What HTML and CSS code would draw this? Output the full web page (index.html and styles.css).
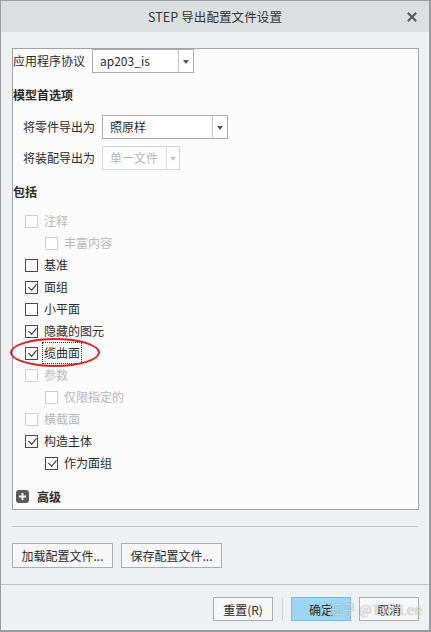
FILE: index.html
```html
<!DOCTYPE html>
<html lang="zh-CN">
<head>
<meta charset="utf-8">
<link rel="stylesheet" href="styles.css">
</head>
<body>
<div class="window">
  <div class="titlebar">
    <span class="title">STEP 导出配置文件设置</span>
    <svg class="close" width="10" height="10" viewBox="0 0 10 10"><path d="M1.5 1.5 L8.5 8.5 M8.5 1.5 L1.5 8.5" stroke="#555" stroke-width="2" stroke-linecap="square"/></svg>
  </div>
  <div class="content">
    <div class="panel">
      <div class="row proto">
        <span class="label">应用程序协议</span>
        <div class="select w1"><span class="val">ap203_is</span><span class="arrow"></span></div>
      </div>
      <div class="heading h1">模型首选项</div>
      <div class="row sub r1">
        <span class="label">将零件导出为</span>
        <div class="select w2"><span class="val">照原样</span><span class="arrow"></span></div>
      </div>
      <div class="row sub r2">
        <span class="label">将装配导出为</span>
        <div class="select w3 disabled"><span class="val">单一文件</span><span class="arrow"></span></div>
      </div>
      <div class="heading h2">包括</div>
      <div class="checks">
        <div class="cb disabled"><span class="box"></span><span class="txt">注释</span></div>
        <div class="cb nested disabled"><span class="box"></span><span class="txt">丰富内容</span></div>
        <div class="cb"><span class="box"></span><span class="txt">基准</span></div>
        <div class="cb checked"><span class="box"></span><span class="txt">面组</span></div>
        <div class="cb"><span class="box"></span><span class="txt">小平面</span></div>
        <div class="cb checked"><span class="box"></span><span class="txt">隐藏的图元</span></div>
        <div class="cb checked focus"><span class="box"></span><span class="txt">缆曲面</span><span class="ring"></span></div>
        <div class="cb disabled"><span class="box"></span><span class="txt">参数</span></div>
        <div class="cb nested disabled"><span class="box"></span><span class="txt">仅限指定的</span></div>
        <div class="cb disabled"><span class="box"></span><span class="txt">横截面</span></div>
        <div class="cb checked"><span class="box"></span><span class="txt">构造主体</span></div>
        <div class="cb nested checked"><span class="box"></span><span class="txt">作为面组</span></div>
      </div>
      <div class="advanced">
        <svg class="plus" width="13" height="13" viewBox="0 0 13 13"><rect x="0" y="0" width="13" height="13" rx="3" fill="#5b5b5b"/><path d="M6.5 3 V10 M3 6.5 H10" stroke="#fff" stroke-width="1.8"/></svg>
        <span class="txt">高级</span>
      </div>
    </div>
    <div class="sep"></div>
    <div class="filebtns">
      <button class="btn wide">加载配置文件...</button>
      <button class="btn wide">保存配置文件...</button>
    </div>
  </div>
  <div class="footer">
    <button class="btn small">重置(R)</button>
    <span class="vsep"></span>
    <button class="btn small primary">确定</button>
    <button class="btn small">取消</button>
    <span class="watermark">知乎 @TomLee</span>
  </div>
</div>
</body>
</html>
```
FILE: styles.css
```css
* { box-sizing: border-box; }
html, body { margin: 0; padding: 0; }
body {
  width: 431px;
  height: 632px;
  font-family: "Noto Sans CJK SC", "Noto Sans", sans-serif;
  font-size: 12px;
  color: #2b2b2b;
  background: #eef0f1;
}
.window {
  width: 431px;
  height: 632px;
  border: 1px solid #9c9c9c;
  border-bottom-width: 2px;
  border-right-width: 2px;
  background: #eef0f1;
  display: flex;
  flex-direction: column;
}
.titlebar {
  height: 31px;
  background: #dcdfe0;
  display: flex;
  align-items: center;
  justify-content: center;
  position: relative;
  flex-shrink: 0;
}
.title { font-size: 12.5px; color: #333; letter-spacing: 0.1px; }
.close { position: absolute; right: 12px; top: 11px; }
.content {
  padding: 16px 10px 0 11px;
  display: flex;
  flex-direction: column;
}
.panel {
  height: 462px;
  border: 1px solid #a3a3a3;
  background: #fbfbfb;
  display: flex;
  flex-direction: column;
}
.row { display: flex; align-items: center; height: 24px; }
.proto .label { margin-left: 0; width: 79px; }
.label { line-height: 24px; }
.sub { padding-left: 10px; }
.sub .label { width: 79px; }
.r1 { margin-top: 9px; }
.r2 { margin-top: 7px; }
.select {
  height: 24px;
  border: 1px solid #ababab;
  background: #fff;
  display: flex;
  align-items: stretch;
}
.select .val { flex: 1; padding-left: 7px; line-height: 22px; }
.select .arrow {
  width: 15px;
  border-left: 1px solid #c4c4c4;
  position: relative;
}
.select .arrow::after {
  content: "";
  position: absolute;
  left: 4px;
  top: 10px;
  border-left: 3.5px solid transparent;
  border-right: 3.5px solid transparent;
  border-top: 4px solid #555;
}
.w1 { width: 102px; margin-top: -1px; }
.w2 { width: 126px; }
.w3 { width: 78px; }
.w3 .arrow { width: 13px; }
.w3 .arrow::after { left: 3px; }
.select.disabled { border-color: #d3d3d3; color: #b5b5b5; }
.select.disabled .arrow { border-left-color: #dadada; }
.select.disabled .arrow::after { border-top-color: #c3c3c3; }
.heading { font-weight: bold; height: 22px; line-height: 22px; color: #2b2b2b; }
.h1 { margin-top: 11px; }
.h2 { margin-top: 11px; }
.checks { margin-top: 7px; display: flex; flex-direction: column; }
.cb {
  height: 22px;
  display: flex;
  align-items: center;
  padding-left: 12px;
  position: relative;
}
.cb.nested { padding-left: 32px; }
.cb .box {
  width: 13px;
  height: 13px;
  border: 1px solid #4a4a4a;
  background: #fff;
  position: relative;
  flex-shrink: 0;
}
.cb.checked .box::after {
  content: "";
  position: absolute;
  left: 3.5px;
  top: 0.5px;
  width: 3.5px;
  height: 7px;
  border-right: 1.6px solid #222;
  border-bottom: 1.6px solid #222;
  transform: rotate(40deg);
}
.cb .txt { margin-left: 6px; line-height: 20px; }
.cb.disabled .box { border-color: #cfcfcf; }
.cb.disabled .txt { color: #b8b8b8; }
.cb.focus .txt {
  outline: 1px dotted #333;
  outline-offset: 0;
  padding: 0 1px;
  margin-left: 5px;
}
.ring {
  position: absolute;
  left: -3px;
  top: -4px;
  width: 90px;
  height: 29px;
  border: 2.5px solid #d8232a;
  border-radius: 50%;
  pointer-events: none;
}
.advanced {
  margin-top: 11px;
  height: 22px;
  display: flex;
  align-items: center;
  padding-left: 3px;
}
.advanced .txt { margin-left: 8px; font-weight: bold; }
.sep {
  margin-top: 16px;
  height: 1px;
  background: #c6c6c6;
  margin-right: 1px;
}
.filebtns {
  margin-top: 16px;
  display: flex;
  gap: 8px;
}
.btn {
  font-family: inherit;
  font-size: 12px;
  color: #2b2b2b;
  background: #f7f7f7;
  border: 1px solid #adadad;
  padding: 0;
  margin: 0;
}
.btn.wide { width: 101px; height: 25px; }
.footer {
  margin-top: 16px;
  border-top: 1px solid #c3c3c3;
  display: flex;
  align-items: center;
  padding: 12px 0 0 212px;
  position: relative;
}
.btn.small { width: 60px; height: 24px; }
.vsep { width: 1px; height: 22px; background: #cfcfcf; margin: 0 8px 0 9px; }
.btn.primary { background: #9cd6f5; border-color: #75bde6; margin-right: 8px; }
.watermark {
  position: absolute;
  left: 328px;
  top: 13px;
  white-space: nowrap;
  font-size: 13.5px;
  line-height: 22px;
  color: rgba(255, 255, 255, 0.7);
  text-shadow: 0 0 1px rgba(0, 0, 0, 0.45);
  pointer-events: none;
}
```
